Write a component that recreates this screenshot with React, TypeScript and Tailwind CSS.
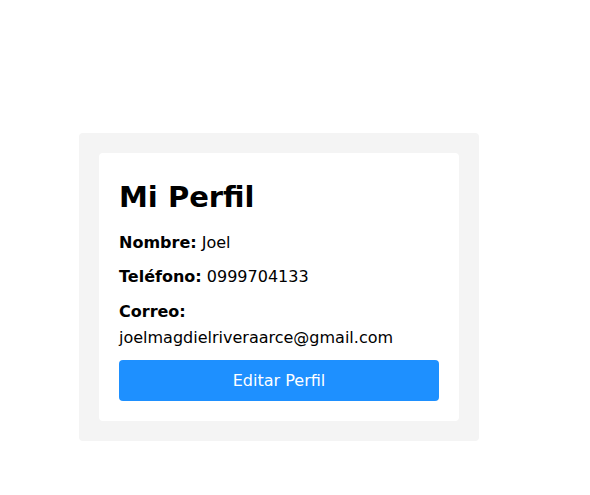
const user = {
  nombre: "Joel",
  telefono: "0999704133",
  correo: "joelmagdielriveraarce@gmail.com",
};

export default function App() {
  return (
    <div
      className="min-h-[495px] bg-white pt-[133px] pl-[79px] text-black"
      style={{ fontFamily: '"DejaVu Sans", "Noto Sans", sans-serif' }}
    >
      <div className="w-[400px] rounded bg-[#f4f4f4] p-5">
        <div className="rounded bg-white p-5">
          <h1 className="mb-[10px] text-[29px] font-bold leading-[48px]">
            Mi Perfil
          </h1>
          <p className="mb-[10px] text-base leading-6">
            <strong>Nombre:</strong> {user.nombre}
          </p>
          <p className="mb-[10px] text-base leading-6">
            <strong>Teléfono:</strong> {user.telefono}
          </p>
          <p className="mb-[9px] text-base leading-[26px]">
            <strong>Correo:</strong>
            <br />
            {user.correo}
          </p>
          <button className="h-[41px] w-full rounded bg-[#1e90ff] text-base text-white">
            Editar Perfil
          </button>
        </div>
      </div>
    </div>
  );
}
